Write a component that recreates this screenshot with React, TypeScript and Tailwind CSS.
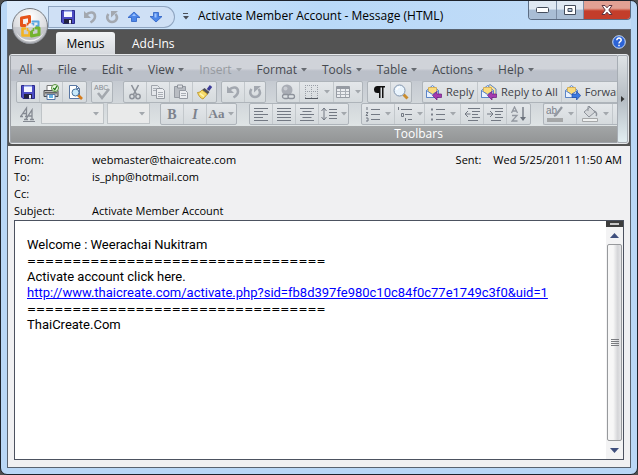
import type { ReactNode } from "react";

const MENUS = ["All", "File", "Edit", "View", "Insert", "Format", "Tools", "Table", "Actions", "Help"];

const RULE = "=================================";

function Caret({ className = "text-[#666a70]" }: { className?: string }) {
  return (
    <svg width="6" height="4" viewBox="0 0 6 4" className={`shrink-0 ${className}`}>
      <path d="M0 0h6L3 3.6z" fill="currentColor" />
    </svg>
  );
}

function Icon({ children, size = 16 }: { children: ReactNode; size?: number }) {
  return (
    <svg width={size} height={size} viewBox="0 0 16 16" fill="none" className="shrink-0">
      {children}
    </svg>
  );
}

function SaveIcon() {
  return (
    <Icon>
      <path d="M1.500 1.500h13v13H3L1.500 13z" fill="#4c4cc4" stroke="#2a2a8c" />
      <path d="M4 2h8v6H4z" fill="#f4f6ff" />
      <path d="M4 1.500h8V3H4z" fill="#a5b4f2" />
      <path d="M4 10h8v4.500H4z" fill="#23233f" />
      <path d="M9 11h2v3.500H9z" fill="#eef" />
    </Icon>
  );
}

function UndoIcon() {
  return (
    <Icon>
      <path d="M4 6c4-4 9-3 9 1.500 0 3-2 4.500-4.500 6" stroke="#a3a8b0" strokeWidth="2.600" />
      <path d="M2 2v7h7z" fill="#a3a8b0" />
    </Icon>
  );
}

function RedoIcon() {
  return (
    <Icon>
      <path d="M4.500 5C2 8 3.500 13 8 13s6.500-4.500 3.500-8" stroke="#a3a8b0" strokeWidth="2.600" />
      <path d="M7 2h7L7 8.500z" fill="#a3a8b0" />
    </Icon>
  );
}

function ArrowIcon({ down = false }: { down?: boolean }) {
  return (
    <Icon>
      <path
        d={down ? "M5.500 3.500h5v4H14L8 13 2 7.500h3.500z" : "M8 3l6 5.500h-3.500v4h-5v-4H2z"}
        fill="#4c86e8"
        stroke="#2c5fc4"
        strokeWidth=".8"
      />
      <path d={down ? "M6.500 4.500h2v4h-2z" : "M8 4.500l2 2.500H6z"} fill="#9fc4ff" />
    </Icon>
  );
}

function PrintIcon() {
  return (
    <Icon>
      <path d="M4 1.500h8V7H4z" fill="#fff" stroke="#777" />
      <path d="M1 6.500h14v6H1z" fill="#bbb" stroke="#4c4c50" />
      <path d="M2 8h12v1.500H2z" fill="#666" />
      <path d="M4 10.500h8v5H4z" fill="#fff" stroke="#5677a4" />
      <path d="M6 11h4v3H6z" fill="#68b5e5" />
      <circle cx="12" cy="4" r="3.500" fill="#eaf7e3" stroke="#58913e" />
      <path d="M10.300 4l1.500 1.600L14 2" stroke="#237a17" strokeWidth="1.300" />
    </Icon>
  );
}

function PreviewIcon() {
  return (
    <Icon>
      <path d="M2.500 1.500h7l3 3v10h-10z" fill="#fff" stroke="#5876a3" />
      <path d="M9.500 1.500v3h3" stroke="#5876a3" />
      <path d="M11 11l4 4" stroke="#d47b1b" strokeWidth="2.600" />
      <circle cx="8.500" cy="8.500" r="3.500" fill="#c7e9fb" stroke="#47719b" />
    </Icon>
  );
}

function SpellIcon() {
  return (
    <svg width="18" height="18" viewBox="0 0 18 18" fill="none">
      <text x="1" y="7" fontSize="7" fontFamily="Liberation Sans" fill="#858a91">ABC</text>
      <path d="M5 10l4 5 7-9" stroke="#a3a8ae" strokeWidth="2.600" />
    </svg>
  );
}

function CutIcon() {
  return (
    <Icon>
      <path d="M4.500 1l5 9.500M11.500 1l-5 9.500" stroke="#8c9199" strokeWidth="1.600" />
      <circle cx="5" cy="12.500" r="2.200" stroke="#8c9199" strokeWidth="1.500" />
      <circle cx="11" cy="12.500" r="2.200" stroke="#8c9199" strokeWidth="1.500" />
    </Icon>
  );
}

function CopyIcon() {
  return (
    <Icon>
      <path d="M1.500 1.500h6l2 2v8h-8z" fill="#e4e7eb" stroke="#a0a5ac" />
      <path d="M6.500 4.500h6l2 2v8h-8z" fill="#eceef1" stroke="#969ba3" />
      <path d="M3 4.500h3M3 6.500h3M8 8.500h5M8 10.500h5M8 12.500h5" stroke="#a9aeb5" />
    </Icon>
  );
}

function PasteIcon() {
  return (
    <Icon>
      <path d="M1.500 2.500h11v11h-11z" fill="#b9bdc3" stroke="#969ba3" />
      <path d="M4.500 1h5v3h-5z" fill="#dfe1e5" stroke="#8e939b" />
      <path d="M6.500 6.500h6l2 2v6h-8z" fill="#eceef1" stroke="#969ba3" />
      <path d="M8 9.500h5M8 11.500h5" stroke="#a9aeb5" />
    </Icon>
  );
}

function BrushIcon() {
  return (
    <Icon>
      <path d="M11 6l3-4" stroke="#3b3b99" strokeWidth="3" />
      <path d="M7.500 4l5 4-2 2.500L5 6z" fill="#50505c" />
      <path d="M5 6l5.500 4-4.500 5c-2-.5-4.500-3-5.500-6.500C2.500 8.500 4 7.500 5 6z" fill="#f7dc6a" stroke="#b68b1e" strokeWidth=".8" />
      <path d="M3 9.500l4 3" stroke="#fff6b8" strokeWidth="1.500" />
    </Icon>
  );
}

function LinkIcon() {
  return (
    <Icon>
      <circle cx="7" cy="6" r="5.500" fill="#a9adb5" />
      <circle cx="5.500" cy="4.500" r="2" fill="#c9ccd2" />
      <rect x="2.500" y="10.500" width="6.500" height="4" rx="2" fill="#dde1e4" stroke="#8d929b" strokeWidth="1.300" />
      <rect x="8" y="10.500" width="6.500" height="4" rx="2" fill="#dde1e4" stroke="#8d929b" strokeWidth="1.300" />
    </Icon>
  );
}

function BordersIcon() {
  return (
    <Icon>
      <path d="M1.500 1v13M7.500 1v13M13.500 1v13M1 1.500h13M1 7.500h13" stroke="#9a9fa7" strokeDasharray="1 1" />
      <path d="M1 14.500h13" stroke="#555a62" />
    </Icon>
  );
}

function TableIcon() {
  return (
    <Icon>
      <path d="M1.500 2.500h13v11h-13z" fill="#eceef1" stroke="#969ba3" />
      <path d="M2 3h12v2H2z" fill="#969ba3" />
      <path d="M5.500 5v8M10.500 5v8M2 7.500h12M2 10.500h12" stroke="#a9aeb5" />
    </Icon>
  );
}

function PilcrowIcon() {
  return (
    <Icon>
      <path d="M14 2H6.500a3.500 3.500 0 0 0 0 7H8v5h1.500V3.500H11V14h1.500V3.500H14z" fill="#111" />
    </Icon>
  );
}

function ZoomIcon() {
  return (
    <Icon>
      <path d="M10.500 10.500L14.500 14.500" stroke="#c98c2e" strokeWidth="3" />
      <circle cx="6.500" cy="6.500" r="5.500" fill="#e9f4fd" stroke="#8093ac" />
      <path d="M3.500 6c.5-2 2-3 3.500-3" stroke="#fff" strokeWidth="1.500" />
    </Icon>
  );
}

function MailIcon({ kind }: { kind: "reply" | "all" | "forward" }) {
  return (
    <Icon>
      {kind === "all" && <path d="M4 5l5-4.500L15 5v6H4z" fill="#fbe39a" stroke="#5c85c6" />}
      <path d="M.5 6.500l6-5 6 5v7H.500z" fill="#d6e6fb" stroke="#5c85c6" />
      <path d="M2.500 3.500h8v4.500l-4 2-4-2z" fill="#fbdc7c" stroke="#d5a33a" strokeWidth=".7" />
      <path d="M.5 6.500l6 4 6-4v7H.500z" fill="#e9f2fe" stroke="#5c85c6" />
      {kind === "forward" ? (
        <path d="M15.700 11.500l-4.200-4V10H7v3.500h4.500V16z" fill="#3d7ae0" stroke="#1f4ca8" strokeWidth=".7" />
      ) : (
        <path d="M6.500 11.500l4.500-4V10h4.500v3.500H11V16z" fill="#a43bb0" stroke="#6b1c7c" strokeWidth=".7" />
      )}
    </Icon>
  );
}

function StyleIcon() {
  return (
    <svg width="18" height="18" viewBox="0 0 18 18" fill="none" stroke="#858a92">
      <path d="M2 11L7.500 3v8M4 8.500h3.500M1 11.500h3M6 11.500h3" strokeWidth="1.300" />
      <path d="M7 14l6-9v9M9.500 11h3.500M5 14.500h4M11 14.500h4" strokeWidth="1.300" />
      <path d="M4 16.500h12" />
    </svg>
  );
}

type LinesKind = "left" | "justify" | "center" | "spacing" | "numbers" | "levels" | "bullets" | "outdent" | "indent";

const LINES: Record<LinesKind, string> = {
  left: "M1 2.500h14M1 5.500h9M1 8.500h14M1 11.500h9M1 14.500h14",
  justify: "M1 2.500h14M1 5.500h14M1 8.500h14M1 11.500h14M1 14.500h14",
  center: "M1 2.500h14M3.500 5.500h9M1 8.500h14M3.500 11.500h9M1 14.500h14",
  spacing: "M8 3.500h8M8 6.500h8M8 9.500h8M8 12.500h8M3 2v12M.5 5L3 2l2.500 3M.5 11L3 14l2.500-3",
  numbers: "M6 3.500h9M6 8.500h9M6 13.500h9M2 1v3M1 6.500h2l-2 3h2M1 12h2v3H1",
  levels: "M4 3.500h11M8 8.500h7M11 13.500h4M1.500 1v3M4.500 7.500h2v3h-2zM8.500 12v3",
  bullets: "M6 3.500h9M6 8.500h9M6 13.500h9",
  outdent: "M4 2.500h12M8 5.500h8M8 8.500h6M8 11.500h8M4 14.500h10M6.500 8H1M4 5L1 8l3 3",
  indent: "M4 2.500h12M8 5.500h8M8 8.500h6M8 11.500h8M4 14.500h10M0 8h5.500M3 5l3 3-3 3",
};

function LinesIcon({ kind }: { kind: LinesKind }) {
  return (
    <Icon>
      <path d={LINES[kind]} stroke="#737983" />
      {kind === "bullets" && <path d="M1 2.500h2v2H1zM1 7.500h2v2H1zM1 12.500h2v2H1z" fill="#7d828c" />}
    </Icon>
  );
}

function SortIcon() {
  return (
    <Icon>
      <path d="M.5 7L3.500 1l3 6M1.500 5h4M1 9.500h5L1 15h5.500" stroke="#9398a0" strokeWidth="1.300" />
      <path d="M12 1v11" stroke="#6c727c" strokeWidth="1.300" />
      <path d="M9 11h6l-3 4z" fill="#6c727c" />
    </Icon>
  );
}

function HighlightIcon() {
  return (
    <svg width="18" height="18" viewBox="0 0 18 18" fill="none">
      <text x="0" y="9" fontSize="10" fontFamily="Liberation Sans" fill="#7d828c">ab</text>
      <path d="M16 2l-6 8-2 1" stroke="#9398a0" strokeWidth="2.200" />
      <path d="M1 13h16v4H1z" fill="#a5a7a8" />
    </svg>
  );
}

function FillIcon() {
  return (
    <svg width="18" height="18" viewBox="0 0 18 18" fill="none">
      <path d="M3 7l6-5 5 5-6 5z" fill="#d4d7da" stroke="#8d929a" />
      <path d="M7 6V1.500h2" stroke="#8d929a" />
      <path d="M13 6c3 1 3 4 2 5" stroke="#8d929a" strokeWidth="1.500" />
      <path d="M1.500 13.500h15v3h-15z" fill="#eef0f0" stroke="#a5a7a8" />
    </svg>
  );
}

function OfficeLogo() {
  return (
    <svg width="38" height="38" viewBox="0 0 38 38" fill="none">
      <defs>
        <radialGradient id="orb" cx=".5" cy=".25" r=".8">
          <stop offset="0" stopColor="#ffffff" />
          <stop offset=".6" stopColor="#dcdde0" />
          <stop offset="1" stopColor="#a4a7ad" />
        </radialGradient>
      </defs>
      <circle cx="19" cy="19" r="17.500" fill="url(#orb)" stroke="#75797f" />
      <path d="M2 20h34a17 17 0 0 1-34 0z" fill="#b8babf" opacity=".5" />
      <path d="M5 25a15 15 0 0 0 28 0q-5 8-14 8T5 25z" fill="#fff" opacity=".8" />
      <g strokeLinejoin="round" strokeLinecap="round">
        <path d="M14 18.500h-3.500V11l8-1.500V15" stroke="#e6541a" strokeWidth="3" />
        <path d="M21.500 14.500h6V19h-2" stroke="#5ba6e0" strokeWidth="2" />
        <path d="M14 21.500h-2.500v7h7V25" stroke="#f2b323" strokeWidth="2.600" />
        <path d="M25 21h3v6.500l-7.500 1.500v-4" stroke="#74b32f" strokeWidth="3" />
      </g>
      <path d="M18 16.500h-1.500v2" stroke="#e6541a" strokeWidth="1.600" />
      <path d="M20.500 16.500h2v2" stroke="#5ba6e0" strokeWidth="1.600" />
      <path d="M16.500 21v2.500h2" stroke="#f2b323" strokeWidth="1.600" />
      <path d="M22.500 21v2.500h-2" stroke="#74b32f" strokeWidth="1.600" />
    </svg>
  );
}

function Group({ children, open = false }: { children: ReactNode; open?: boolean }) {
  return (
    <div
      className={`flex h-[22px] shrink-0 divide-x divide-[#c3c8cc] border border-[#aeb4ba] bg-linear-to-b from-[#e4e7ea] to-[#d5dadd] ${
        open ? "rounded-l-xs border-r-0" : "rounded-xs"
      }`}
    >
      {children}
    </div>
  );
}

function Tool({ label, width = "w-[23px]", drop = false, children }: {
  label: string;
  width?: string;
  drop?: boolean;
  children: ReactNode;
}) {
  return (
    <button aria-label={label} className={`flex shrink-0 items-center justify-center gap-1 ${width}`}>
      {children}
      {drop && <Caret className="text-[#a3a8ad]" />}
    </button>
  );
}

function MailTool({ label, kind }: { label: string; kind: "reply" | "all" | "forward" }) {
  return (
    <button className="flex shrink-0 items-center gap-1 px-[3px] text-[11px] text-[#3f4248]">
      <MailIcon kind={kind} />
      {label}
    </button>
  );
}

function TitleBar() {
  return (
    <header className="relative flex h-7 shrink-0 items-start bg-linear-to-r from-[#dcebfb] via-[#b9d9f8] to-[#c2dcf7] pl-[41px]">
      <div className="absolute top-[6px] left-1 z-10">
        <button aria-label="Office Button" className="block">
          <OfficeLogo />
        </button>
      </div>
      <div className="mt-[5px] flex h-[22px] w-[127px] items-center justify-end gap-[6px] rounded-tl-[3px] rounded-r-full border border-[#8fa5c1] bg-[#cfe0f5] pr-[10px]">
        <button aria-label="Save"><SaveIcon /></button>
        <button aria-label="Undo"><UndoIcon /></button>
        <button aria-label="Redo"><RedoIcon /></button>
        <button aria-label="Previous Item"><ArrowIcon /></button>
        <button aria-label="Next Item"><ArrowIcon down /></button>
      </div>
      <button aria-label="Customize Quick Access Toolbar" className="mt-3 ml-[7px] flex w-[7px] flex-col items-center gap-[2px]">
        <span className="h-px w-[5px] bg-[#4a4f58]" />
        <Caret className="text-[#4a4f58]" />
      </button>
      <h1 className="ml-[9px] h-7 min-w-0 flex-1 truncate text-[12px] leading-[29px] text-black">
        Activate Member Account - Message (HTML)
      </h1>
      <div className="flex h-[19px] overflow-hidden rounded-b-[4px] border border-t-0 border-[#5c6c82]">
        <button aria-label="Minimize" className="flex w-7 items-center justify-center border-r border-[#7b8ca3] bg-linear-to-b from-[#dfe8f2] from-45% to-[#a9bdd4] to-50%">
          <svg width="13" height="6" viewBox="0 0 13 6"><rect x=".5" y=".5" width="12" height="5" rx="1" fill="#fff" stroke="#444d5c" /></svg>
        </button>
        <button aria-label="Restore" className="flex w-[27px] items-center justify-center border-r border-[#7b8ca3] bg-linear-to-b from-[#dfe8f2] from-45% to-[#a9bdd4] to-50%">
          <svg width="12" height="10" viewBox="0 0 12 10">
            <path d="M.5.500h11v9H.500zM4 3.500h4v3H4z" fill="#fff" fillRule="evenodd" stroke="#444d5c" />
          </svg>
        </button>
        <button aria-label="Close" className="flex w-[46px] items-center justify-center bg-linear-to-b from-[#e2a194] from-40% to-[#c33d2a] to-55%">
          <svg width="14" height="12" viewBox="0 0 14 12">
            <path d="M2 1.500h3l2 2.300 2-2.300h3L8.800 6l3.200 4.500H9L7 8.200 5 10.500H2L5.200 6z" fill="#fff" stroke="#5d3540" />
          </svg>
        </button>
      </div>
    </header>
  );
}

function RowOne() {
  return (
    <div className="flex h-[22px] gap-1">
      <Group>
        <Tool label="Save"><SaveIcon /></Tool>
        <Tool label="Print"><PrintIcon /></Tool>
        <Tool label="Print Preview"><PreviewIcon /></Tool>
      </Group>
      <Group>
        <Tool label="Spelling" width="w-5"><SpellIcon /></Tool>
      </Group>
      <div className="ml-[6px]">
        <Group>
          <Tool label="Cut"><CutIcon /></Tool>
          <Tool label="Copy"><CopyIcon /></Tool>
          <Tool label="Paste"><PasteIcon /></Tool>
          <Tool label="Format Painter"><BrushIcon /></Tool>
        </Group>
      </div>
      <Group>
        <Tool label="Undo"><UndoIcon /></Tool>
        <Tool label="Redo" width="w-5"><RedoIcon /></Tool>
      </Group>
      <div className="ml-[6px]">
        <Group>
          <Tool label="Hyperlink"><LinkIcon /></Tool>
          <Tool label="Borders" width="w-[34px]" drop><BordersIcon /></Tool>
          <Tool label="Insert Table" width="w-[28px]" drop><TableIcon /></Tool>
        </Group>
      </div>
      <Group>
        <Tool label="Show Marks"><PilcrowIcon /></Tool>
        <Tool label="Zoom" width="w-5"><ZoomIcon /></Tool>
      </Group>
      <div className="ml-[6px]">
        <Group open>
          <MailTool label="Reply" kind="reply" />
          <MailTool label="Reply to All" kind="all" />
          <MailTool label="Forward" kind="forward" />
        </Group>
      </div>
    </div>
  );
}

function RowTwo() {
  return (
    <div className="flex h-[22px]">
      <Tool label="Styles"><StyleIcon /></Tool>
      <select aria-label="Font" disabled className="ml-[2px] h-[21px] w-[63px] shrink-0 appearance-none border border-[#bfc4c7] bg-[#e9eaea]" />
      <span className="-ml-[11px] flex w-[11px] shrink-0 items-center"><Caret className="text-[#a3a8ad]" /></span>
      <select aria-label="Font Size" disabled className="ml-[3px] h-[21px] w-[43px] shrink-0 appearance-none border border-[#bfc4c7] bg-[#e9eaea]" />
      <span className="-ml-[11px] flex w-[11px] shrink-0 items-center"><Caret className="text-[#a3a8ad]" /></span>
      <div className="ml-[10px] flex gap-3">
        <Group>
          <Tool label="Bold"><b className="font-['Liberation_Serif'] text-[14px] text-[#7d828c]">B</b></Tool>
          <Tool label="Italic"><i className="font-['Liberation_Serif'] text-[14px] font-bold text-[#7d828c]">I</i></Tool>
          <Tool label="Change Case" width="w-[29px]" drop>
            <span className="font-['Liberation_Serif'] text-[13px] font-bold text-[#7d828c]">Aa</span>
          </Tool>
        </Group>
        <Group>
          <Tool label="Align Left"><LinesIcon kind="left" /></Tool>
          <Tool label="Justify"><LinesIcon kind="justify" /></Tool>
          <Tool label="Center"><LinesIcon kind="center" /></Tool>
          <Tool label="Line Spacing" width="w-[29px]" drop><LinesIcon kind="spacing" /></Tool>
        </Group>
        <Group>
          <Tool label="Numbering" width="w-[33px]" drop><LinesIcon kind="numbers" /></Tool>
          <Tool label="Multilevel List" width="w-[30px]" drop><LinesIcon kind="levels" /></Tool>
          <Tool label="Bullets" width="w-[36px]" drop><LinesIcon kind="bullets" /></Tool>
          <Tool label="Decrease Indent"><LinesIcon kind="outdent" /></Tool>
          <Tool label="Increase Indent"><LinesIcon kind="indent" /></Tool>
          <Tool label="Sort"><SortIcon /></Tool>
        </Group>
        <Group open>
          <Tool label="Highlight" width="w-[33px]" drop><HighlightIcon /></Tool>
          <Tool label="Shading" width="w-[36px]" drop><FillIcon /></Tool>
          <Tool label="Font Color"><FillIcon /></Tool>
        </Group>
      </div>
    </div>
  );
}

function Ribbon() {
  return (
    <div className="shrink-0 bg-[#535353] px-px pb-[2px]">
      <nav className="flex h-6 items-end">
        <button className="ml-[47px] h-[22px] w-[59px] rounded-t-[3px] bg-linear-to-b from-[#f2f4f5] to-[#d6d9de] pt-px text-black">Menus</button>
        <button className="ml-[17px] h-[22px] pt-px text-white">Add-Ins</button>
        <button aria-label="Help" className="mr-[3px] ml-auto flex h-full items-center">
          <svg width="14" height="14" viewBox="0 0 14 14" fill="none">
            <circle cx="7" cy="7" r="6.300" fill="#2c63d6" stroke="#c9dcfa" />
            <path d="M4.800 5.200c0-3 4.600-2.600 4.400 0C9 6.800 7 6.500 7 8.500M7 9.800v1.500" stroke="#fff" strokeWidth="1.500" />
          </svg>
        </button>
      </nav>
      <div className="flex h-[90px] overflow-hidden rounded-[3px] border border-[#e6e8eb] bg-[#c3c7cd]">
        <section className="flex min-w-0 flex-1 flex-col overflow-hidden border border-r-0 border-[#9ea2a8]">
          <div className="flex h-[25px] shrink-0 items-center gap-[15px] bg-linear-to-b from-[#d0d3d9] from-50% to-[#bbc0c9] to-60% pt-[2px] pl-[8px]">
            {MENUS.map((name) => (
              <button
                key={name}
                disabled={name === "Insert"}
                className="flex shrink-0 items-center gap-1 text-[#45494f] disabled:text-[#969a9f]"
              >
                {name}
                <Caret className={name === "Insert" ? "text-[#a3a8ad]" : "text-[#666a70]"} />
              </button>
            ))}
          </div>
          <div className="h-[45px] shrink-0 bg-linear-to-b from-[#c5cad1] to-[#dfe4e5] pl-[5px]">
            <RowOne />
            <RowTwo />
          </div>
          <div className="flex-1 bg-linear-to-b from-[#a3a6a7] to-[#939596] pl-[209px] text-center leading-[16px] text-white">
            Toolbars
          </div>
        </section>
        <button aria-label="Scroll right" className="flex w-[11px] items-center justify-center rounded-[2px] border border-[#a7adb4] bg-linear-to-b from-[#dfe3e6] via-[#b5bcc3] to-[#e2eef2]">
          <svg width="4" height="6" viewBox="0 0 4 6"><path d="M0 0v6l3.500-3z" fill="#333" /></svg>
        </button>
      </div>
    </div>
  );
}

function Field({ label, value }: { label: string; value: string }) {
  return (
    <div className="flex h-[17px]">
      <dt className="w-[78px]">{label}</dt>
      <dd>{value}</dd>
    </div>
  );
}

function ScrollBar() {
  return (
    <div className="flex w-[17px] shrink-0 flex-col bg-[#f3f3f4]">
      <div className="flex h-[6px] items-center justify-center bg-[#3d3d3d]">
        <span className="h-[2px] w-[9px] bg-[#c8c8c8]" />
      </div>
      <button aria-label="Scroll up" className="flex h-[17px] items-center justify-center">
        <svg width="9" height="5" viewBox="0 0 9 5"><path d="M4.500 0L9 5H0z" fill="#3f4f7d" /></svg>
      </button>
      <div className="mx-px flex flex-1 flex-col items-center justify-center gap-px rounded-[2px] border border-[#97999c] bg-linear-to-r from-[#f7f7f7] from-40% via-[#d4d5d8] via-75% to-[#e6e6e8]">
        <span className="h-px w-2 bg-[#7a7c80]" />
        <span className="h-px w-2 bg-[#7a7c80]" />
        <span className="h-px w-2 bg-[#7a7c80]" />
        <span className="h-px w-2 bg-[#7a7c80]" />
      </div>
      <button aria-label="Scroll down" className="flex h-[18px] items-center justify-center">
        <svg width="9" height="5" viewBox="0 0 9 5"><path d="M0 0h9L4.500 5z" fill="#3f4f7d" /></svg>
      </button>
    </div>
  );
}

export default function App() {
  return (
    <div className="min-h-screen bg-[#4d4d4d] font-['Open_Sans',sans-serif] text-[12px]">
      <div className="flex min-h-screen flex-col rounded-[7px] border border-[#1d222b] bg-[#b9d7f6] px-[6px] pb-[6px]">
        <TitleBar />
        <main className="flex flex-1 flex-col border border-[#58626f] bg-[#f0f0f2]">
          <Ribbon />
          <div className="flex justify-between pt-[5px] pr-2 pb-px pl-[6px] text-[11px] leading-[17px] text-black">
            <dl>
              <Field label="From:" value="webmaster@thaicreate.com" />
              <Field label="To:" value="is_php@hotmail.com" />
              <Field label="Cc:" value="" />
              <Field label="Subject:" value="Activate Member Account" />
            </dl>
            <dl className="flex gap-3">
              <dt>Sent:</dt>
              <dd>Wed 5/25/2011 11:50 AM</dd>
            </dl>
          </div>
          <div className="mx-[6px] mb-[7px] flex flex-1 border border-[#4c5260] bg-white">
            <article className="min-w-0 flex-1 px-3 pt-4 font-[Roboto,sans-serif] text-[13px] leading-4 text-black">
              <p>Welcome : Weerachai Nukitram</p>
              <p className="font-['DejaVu_Sans_Condensed','DejaVu_Sans',sans-serif] text-[12px] leading-4">{RULE}</p>
              <p>Activate account click here.</p>
              <p>
                <a className="text-[#0000ff] underline" href="http://www.thaicreate.com/activate.php?sid=fb8d397fe980c10c84f0c77e1749c3f0&uid=1">
                  http://www.thaicreate.com/activate.php?sid=fb8d397fe980c10c84f0c77e1749c3f0&uid=1
                </a>
              </p>
              <p className="font-['DejaVu_Sans_Condensed','DejaVu_Sans',sans-serif] text-[12px] leading-4">{RULE}</p>
              <p>ThaiCreate.Com</p>
            </article>
            <ScrollBar />
          </div>
        </main>
      </div>
    </div>
  );
}
